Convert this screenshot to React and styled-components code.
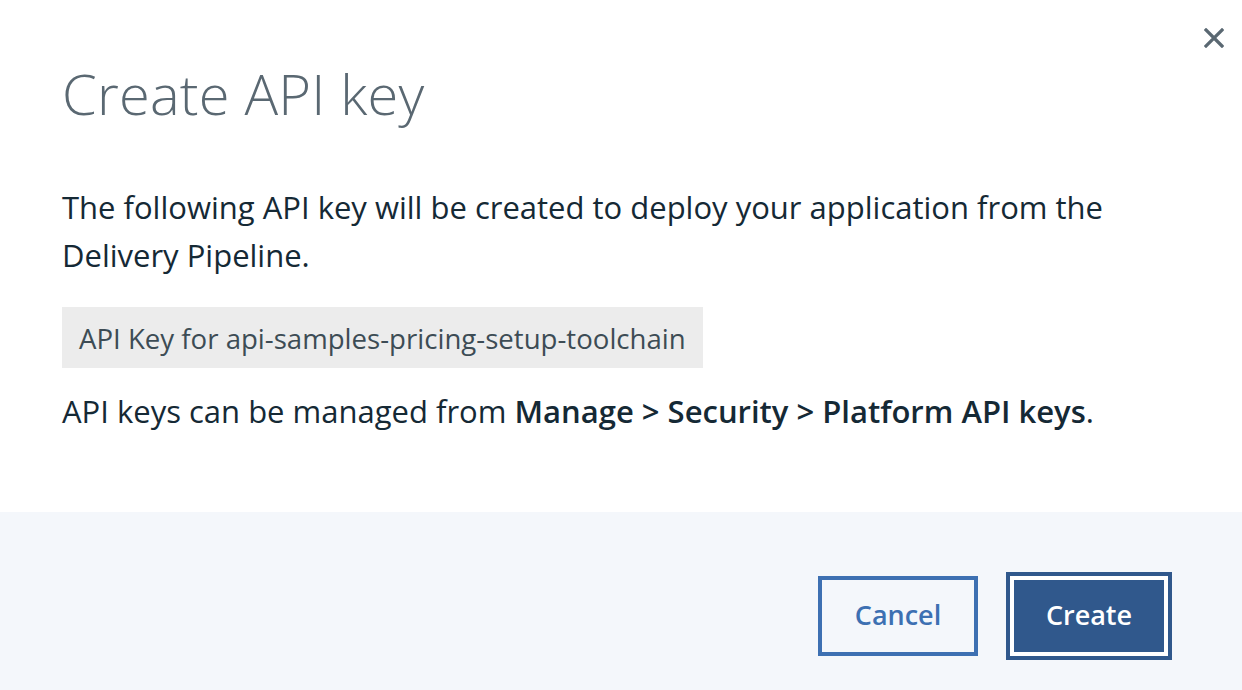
import React from "react";
import styled, { createGlobalStyle } from "styled-components";

const Global = createGlobalStyle`
  html, body { margin: 0; padding: 0; background: #ffffff; }
  body { font-family: "Open Sans", "Noto Sans", sans-serif; }
  * { box-sizing: border-box; }
`;

const Modal = styled.div`
  position: relative;
  width: 1242px;
  height: 690px;
  display: flex;
  flex-direction: column;
  background: #ffffff;
  overflow: hidden;
`;

const Body = styled.div`
  flex: 1;
  display: flex;
  flex-direction: column;
  align-items: flex-start;
  padding: 61px 62px 0 62px;
`;

const Title = styled.h2`
  margin: 0;
  font-weight: 300;
  font-size: 56px;
  line-height: 64px;
  color: #5a6872;
  letter-spacing: 0.2px;
`;

const Text = styled.p`
  margin: ${(p) => p.$mt || 0}px 0 0 0;
  font-size: 31px;
  line-height: 48px;
  color: #152935;
  max-width: 1080px;
`;

const Strong = styled.strong`
  font-weight: 600;
`;

const KeyBox = styled.div`
  margin-top: 28px;
  width: 641px;
  height: 61px;
  display: flex;
  align-items: center;
  padding: 0 17px;
  background: #ececec;
  font-size: 27.6px;
  color: #3d4c55;
`;

const Close = styled.button`
  position: absolute;
  top: 24px;
  right: 14px;
  width: 28px;
  height: 28px;
  padding: 0;
  border: none;
  background: transparent;
  display: flex;
  align-items: center;
  justify-content: center;
  cursor: pointer;
`;

const Footer = styled.div`
  height: 178px;
  background: #f4f7fb;
  display: flex;
  justify-content: flex-end;
  align-items: flex-start;
  gap: 28px;
  padding: 60px 70px 0 0;
`;

const Button = styled.button`
  height: ${(p) => (p.$primary ? 88 : 80)}px;
  width: ${(p) => (p.$primary ? 166 : 160)}px;
  margin-top: ${(p) => (p.$primary ? 0 : 4)}px;
  border: 4px solid ${(p) => (p.$primary ? "#30588c" : "#3d70b2")};
  background: ${(p) => (p.$primary ? "#30588c" : "transparent")};
  box-shadow: ${(p) => (p.$primary ? "inset 0 0 0 4px #ffffff" : "none")};
  color: ${(p) => (p.$primary ? "#ffffff" : "#3d70b2")};
  font-family: "Open Sans", "Noto Sans", sans-serif;
  font-size: 27px;
  font-weight: 600;
  display: flex;
  align-items: center;
  justify-content: center;
  padding: 0 0 4px 0;
  cursor: pointer;
`;

export default function App() {
  return (
    <>
      <Global />
      <Modal>
        <Close aria-label="Close">
          <svg width="20" height="20" viewBox="0 0 20 20">
            <path d="M2 2 L18 18 M18 2 L2 18" stroke="#5a6872" strokeWidth="3.2" strokeLinecap="square" />
          </svg>
        </Close>
        <Body>
          <Title>Create API key</Title>
          <Text $mt={58}>
            The following API key will be created to deploy your application from the Delivery Pipeline.
          </Text>
          <KeyBox>API Key for api-samples-pricing-setup-toolchain</KeyBox>
          <Text $mt={19}>
            API keys can be managed from <Strong>Manage &gt; Security &gt; Platform API keys</Strong>.
          </Text>
        </Body>
        <Footer>
          <Button>Cancel</Button>
          <Button $primary>Create</Button>
        </Footer>
      </Modal>
    </>
  );
}
